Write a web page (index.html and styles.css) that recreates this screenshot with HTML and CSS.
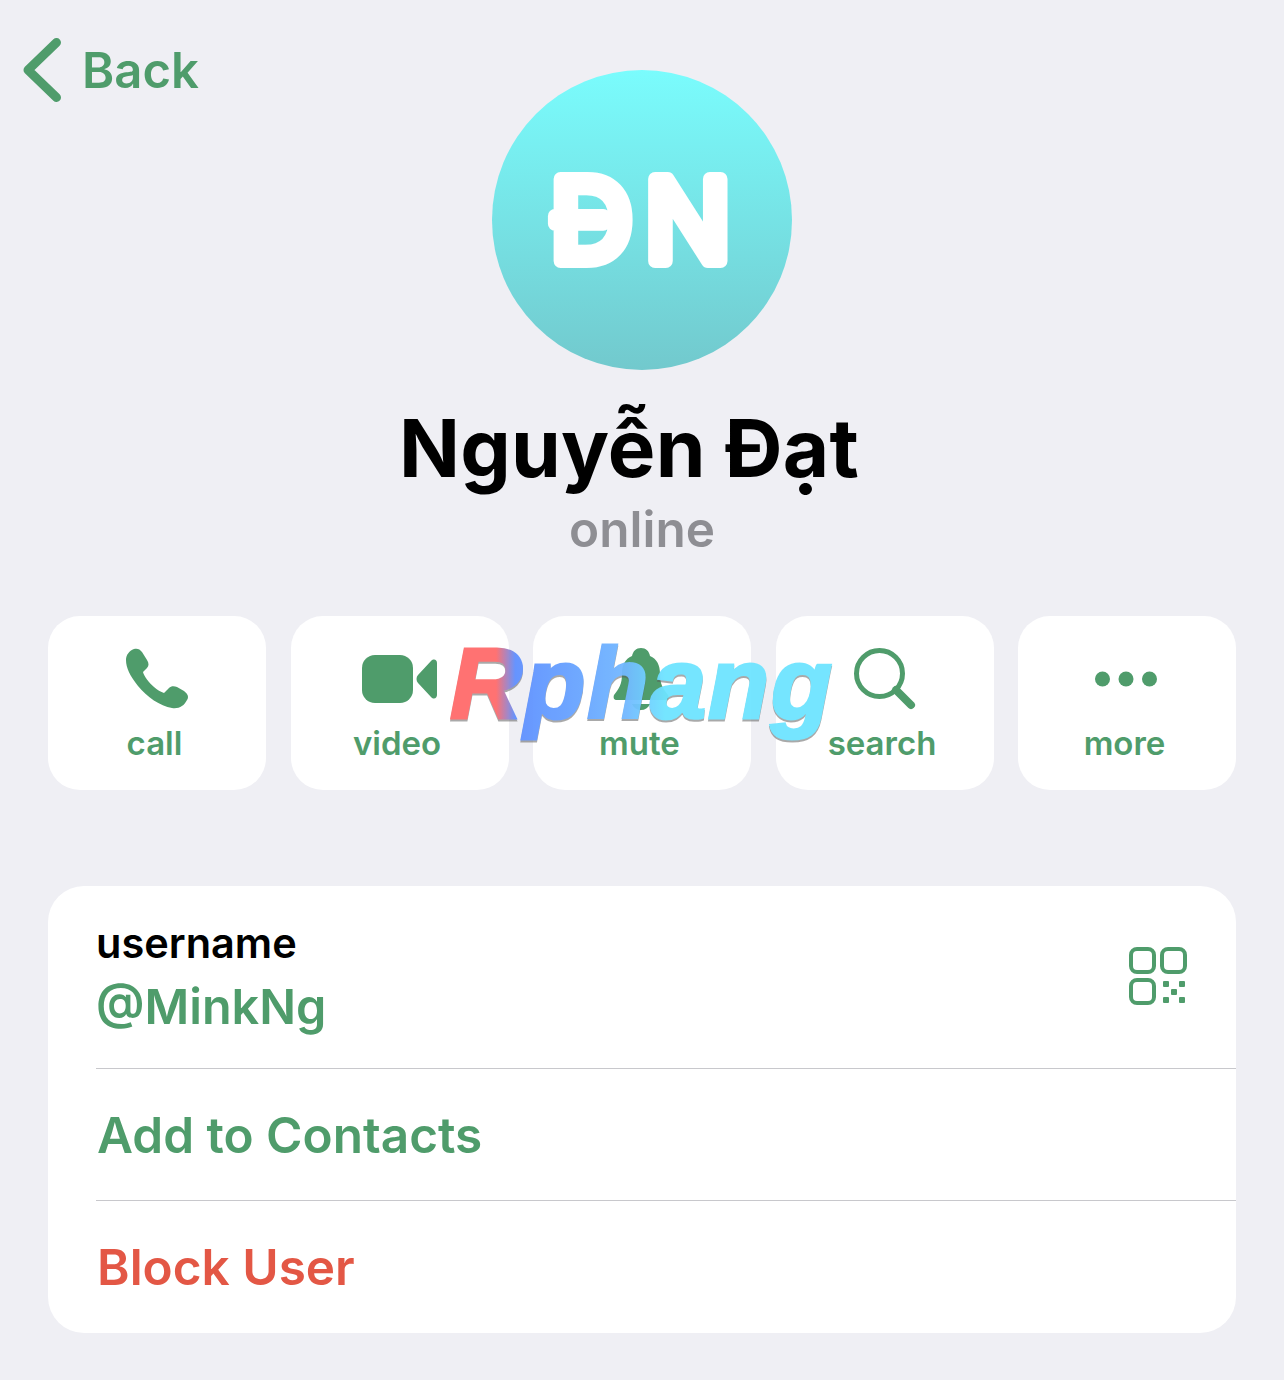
FILE: index.html
```html
<!DOCTYPE html>
<html>
    <head>
        <title>Nguyễn Đạt</title>
        <meta name='viewport' content='width=device-width, initial-scale=1.0'>
        <link rel="stylesheet" href="styles.css">
    </head>
    <body>
        <nav class='nav'>
            <a class='back'>
                <svg class='back-icon' width='38' height='64' viewBox='0 0 38 64'>
                    <path d='M33.5 4.5 L5 32 L33.5 59.5' fill='none' stroke='#4f9c6b' stroke-width='9' stroke-linecap='round' stroke-linejoin='round'/>
                </svg>
                <span>Back</span>
            </a>
        </nav>
        <header class='profile'>
            <div class='avatar'>
                <svg width='300' height='300' viewBox='0 0 300 300'>
                    <text class='initials' x='155' y='191' text-anchor='middle'>ĐN</text>
                </svg>
            </div>
            <h1 class='name'>Nguyễn Đạt</h1>
            <p class='status'>online</p>
        </header>
        <section class='actions'>
            <div class='action'>
                <div class='icon'>
                    <svg width='64' height='62' viewBox='0 0 64 62'>
                        <path d='M9 1 C12 0 15 1 17 4 L22 12 C24 15 24 18 22 20 L18 24 C19 28 24 35 29 39 C32 42 36 44 39 45 L44 40 C46 38 49 38 52 39 L59 43 C63 46 64 49 62 52 C59 58 54 61 47 60 C35 58 22 49 13 38 C5 28 1 20 1 12 C1 7 4 3 9 1 Z' fill='#4f9c6b'/>
                    </svg>
                </div>
                <span>call</span>
            </div>
            <div class='action'>
                <div class='icon'>
                    <svg width='76' height='48' viewBox='0 0 76 48'>
                        <rect x='0' y='0' width='51' height='48' rx='13' fill='#4f9c6b'/>
                        <path d='M56 20 L69 6 C72 3 75 5 75 8 L75 40 C75 43 72 45 69 42 L56 28 C54 26 54 22 56 20 Z' fill='#4f9c6b'/>
                    </svg>
                </div>
                <span>video</span>
            </div>
            <div class='action'>
                <div class='icon'>
                    <svg width='59' height='62' viewBox='0 0 59 62'>
                        <path d='M28 0 C33 0 36 3 37 8 C44 11 47 17 47 26 C47 36 50 41 55 47 C56 50 55 52 52 52 L4 52 C1 52 0 50 1 47 C6 41 9 36 9 26 C9 17 12 11 19 8 C20 3 23 0 28 0 Z' fill='#4f9c6b'/>
                        <path d='M19 56 L37 56 C35 60 32 62 28 62 C24 62 21 60 19 56 Z' fill='#4f9c6b'/>
                    </svg>
                </div>
                <span>mute</span>
            </div>
            <div class='action'>
                <div class='icon'>
                    <svg width='62' height='62' viewBox='0 0 62 62'>
                        <circle cx='25.5' cy='25.5' r='23' fill='none' stroke='#4f9c6b' stroke-width='5'/>
                        <path d='M42 42 L57 57' fill='none' stroke='#4f9c6b' stroke-width='8' stroke-linecap='round'/>
                    </svg>
                </div>
                <span>search</span>
            </div>
            <div class='action'>
                <div class='icon'>
                    <svg width='64' height='62' viewBox='0 0 64 62'>
                        <circle cx='7.5' cy='31' r='7.5' fill='#4f9c6b'/>
                        <circle cx='31' cy='31' r='7.5' fill='#4f9c6b'/>
                        <circle cx='54.5' cy='31' r='7.5' fill='#4f9c6b'/>
                    </svg>
                </div>
                <span>more</span>
            </div>
        </section>
        <section class='info'>
            <div class='row row-username'>
                <div>
                    <div class='label'>username</div>
                    <div class='handle'>@MinkNg</div>
                </div>
                <svg class='qr' width='58' height='58' viewBox='0 0 58 58'>
                    <g fill='none' stroke='#4f9c6b' stroke-width='4'>
                        <rect x='2' y='2' width='23' height='23' rx='6'/>
                        <rect x='33' y='2' width='23' height='23' rx='6'/>
                        <rect x='2' y='33' width='23' height='23' rx='6'/>
                    </g>
                    <g fill='#4f9c6b'>
                        <rect x='34' y='34' width='6' height='6' rx='1'/>
                        <rect x='50' y='34' width='6' height='6' rx='1'/>
                        <rect x='42' y='42' width='6' height='6' rx='1'/>
                        <rect x='34' y='50' width='6' height='6' rx='1'/>
                        <rect x='50' y='50' width='6' height='6' rx='1'/>
                    </g>
                </svg>
            </div>
            <div class='row row-link'>Add to Contacts</div>
            <div class='row row-link row-danger'>Block User</div>
        </section>
        <div class='watermark'>Rphang</div>
    </body>
</html>
```

FILE: styles.css
```css
* {
    margin: 0px;
    padding: 0px;
    box-sizing: border-box;
}
body {
    position: relative;
    width: 1284px;
    height: 1380px;
    overflow: hidden;
    background: #efeff4;
    font-family: Inter, "Noto Sans", sans-serif;
    color: #000;
}
.nav {
    height: 70px;
    padding-left: 23px;
}
.back {
    display: flex;
    align-items: center;
    height: 64px;
    padding-top: 38px;
    box-sizing: content-box;
    gap: 21px;
    color: #4f9c6b;
    font-size: 49px;
    font-weight: 560;
}
.back-icon {
    flex: none;
}
.profile {
    display: flex;
    flex-direction: column;
    align-items: center;
}
.avatar {
    width: 300px;
    height: 300px;
    border-radius: 50%;
    background: linear-gradient(#7afcfd, #72c9cd);
}
.initials {
    font-family: Inter, sans-serif;
    font-size: 113px;
    font-weight: 400;
    fill: #fff;
    stroke: #fff;
    stroke-width: 14px;
    stroke-linejoin: round;
    letter-spacing: 13px;
}
.name {
    margin-top: 29px;
    font-size: 80px;
    font-weight: 700;
    line-height: 97px;
    letter-spacing: 0.2px;
    margin-left: -26px;
}
.status {
    margin-top: 4px;
    font-size: 49.5px;
    font-weight: 560;
    line-height: 58px;
    color: #8e8e93;
}
.actions {
    display: flex;
    justify-content: space-between;
    margin: 58px 48px 0;
}
.action {
    width: 218px;
    height: 174px;
    background: #fff;
    border-radius: 32px;
    display: flex;
    flex-direction: column;
    align-items: center;
    padding-top: 32px;
    color: #4f9c6b;
    font-size: 33px;
    font-weight: 580;
}
.icon {
    height: 62px;
    display: flex;
    align-items: center;
}
.action span {
    margin-top: 13px;
    padding-right: 5px;
    line-height: 40px;
}
.info {
    margin: 96px 48px 0;
    background: #fff;
    border-radius: 36px;
}
.row {
    margin-left: 48px;
}
.row-username {
    height: 183px;
    padding: 32px 49px 0 0;
    display: flex;
    justify-content: space-between;
    align-items: flex-start;
    border-bottom: 1px solid #c8c8cc;
}
.label {
    font-size: 41.5px;
    font-weight: 560;
    line-height: 50px;
}
.handle {
    margin-top: 10px;
    font-size: 48.5px;
    font-weight: 560;
    line-height: 58px;
    color: #4f9c6b;
}
.qr {
    margin-top: 29px;
}
.row-link {
    height: 132px;
    padding-left: 1px;
    display: flex;
    align-items: center;
    font-size: 49.5px;
    font-weight: 560;
    color: #4f9c6b;
    border-bottom: 1px solid #c8c8cc;
}
.row-danger {
    color: #e35745;
    border-bottom: none;
}
/* stamp laid over the action buttons */
.watermark {
    position: absolute;
    left: 450px;
    top: 624px;
    font-family: "Liberation Sans", sans-serif;
    font-size: 100px;
    font-weight: 700;
    font-style: italic;
    line-height: 118px;
    letter-spacing: 2px;
    background: linear-gradient(90deg, #ff6b6b 0%, #ff6b6b 12%, #5f90ff 17%, #6aa8ff 36%, #72b9ff 46%, #6ee4ff 56%, #6ee4ff 100%);
    -webkit-background-clip: text;
    background-clip: text;
    color: transparent;
    -webkit-text-stroke: 3px transparent;
    filter: drop-shadow(0 2px 0 rgba(90, 90, 90, 0.55));
    opacity: 0.95;
}
```
